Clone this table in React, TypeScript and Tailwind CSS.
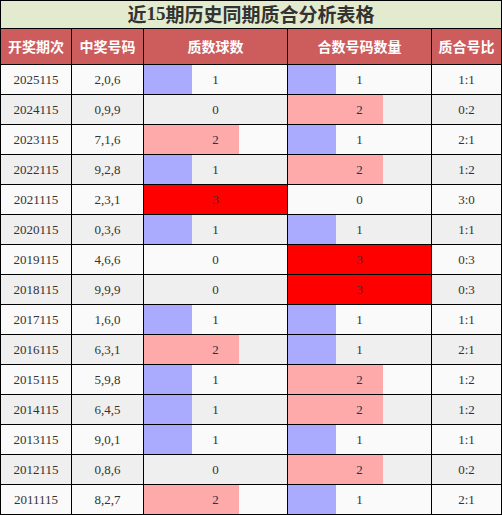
import React from "react";

type Row = { q: string; n: string; z: number; h: number };

const rows: Row[] = [
    { q: "2025115", n: "2,0,6", z: 1, h: 1 },
    { q: "2024115", n: "0,9,9", z: 0, h: 2 },
    { q: "2023115", n: "7,1,6", z: 2, h: 1 },
    { q: "2022115", n: "9,2,8", z: 1, h: 2 },
    { q: "2021115", n: "2,3,1", z: 3, h: 0 },
    { q: "2020115", n: "0,3,6", z: 1, h: 1 },
    { q: "2019115", n: "4,6,6", z: 0, h: 3 },
    { q: "2018115", n: "9,9,9", z: 0, h: 3 },
    { q: "2017115", n: "1,6,0", z: 1, h: 1 },
    { q: "2016115", n: "6,3,1", z: 2, h: 1 },
    { q: "2015115", n: "5,9,8", z: 1, h: 2 },
    { q: "2014115", n: "6,4,5", z: 1, h: 2 },
    { q: "2013115", n: "9,0,1", z: 1, h: 1 },
    { q: "2012115", n: "0,8,6", z: 0, h: 2 },
    { q: "2011115", n: "8,2,7", z: 2, h: 1 },
];

const serif = "font-['Liberation_Serif','Noto_Sans_CJK_SC',serif]";
const cjk = "font-['Noto_Sans_CJK_SC',sans-serif]";

function Bar({ v }: { v: number }) {
    const bar =
        v === 1 ? "w-1/3 bg-[#aaaaff]" : v === 2 ? "w-2/3 bg-[#ffaaaa]" : v === 3 ? "w-full bg-[#ff0000]" : "w-0";
    return (
        <div className="relative h-full border-r border-black">
            <div className={`absolute left-0 top-0 h-full ${bar}`} />
            <div className="relative flex h-full items-center justify-center">{v}</div>
        </div>
    );
}

export default function App() {
    return (
        <div className={`w-[502px] border-l border-t border-black bg-white ${serif} text-[13px] text-[#333]`}>
            <div
                className={`flex h-[28px] items-center justify-center border-b border-r border-black bg-[#e2ebcd] text-[19px] font-bold text-[#333] ${cjk}`}
            >
                近<span className={serif}>15</span>期历史同期质合分析表格
            </div>
            <div
                className={`grid h-[36px] grid-cols-[71px_72px_144px_144px_70px] border-b border-black bg-[#cd5c5c] text-[14px] font-bold text-white ${cjk}`}
            >
                <div className="flex items-center justify-center border-r border-black">开奖期次</div>
                <div className="flex items-center justify-center border-r border-black">中奖号码</div>
                <div className="flex items-center justify-center border-r border-black">质数球数</div>
                <div className="flex items-center justify-center border-r border-black">合数号码数量</div>
                <div className="flex items-center justify-center border-r border-black">质合号比</div>
            </div>
            {rows.map((r, i) => (
                <div
                    key={r.q}
                    className={`grid h-[30px] grid-cols-[71px_72px_144px_144px_70px] border-b border-black ${
                        i % 2 === 0 ? "bg-[#fafafa]" : "bg-[#efefef]"
                    }`}
                >
                    <div className="flex items-center justify-center border-r border-black">{r.q}</div>
                    <div className="flex items-center justify-center border-r border-black">{r.n}</div>
                    <Bar v={r.z} />
                    <Bar v={r.h} />
                    <div className="flex items-center justify-center border-r border-black">
                        {r.z}:{r.h}
                    </div>
                </div>
            ))}
        </div>
    );
}
